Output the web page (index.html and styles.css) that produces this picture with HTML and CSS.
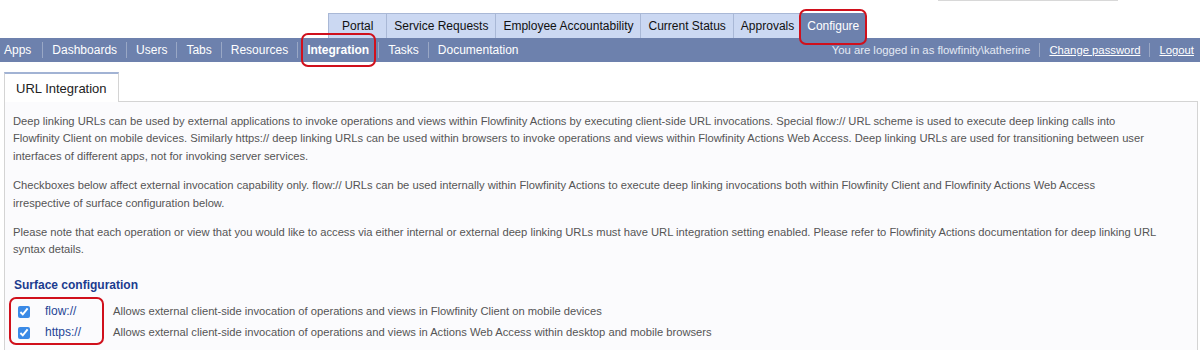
FILE: index.html
```html
<!DOCTYPE html>
<html lang="en">
<head>
    <meta charset="UTF-8">
    <title>Flowfinity Actions - Integration</title>
    <link rel="stylesheet" href="styles.css">
</head>
<body>
    <header class="topbar">
        <div class="search-line"></div>
        <ul class="app-tabs">
            <li>Portal</li>
            <li>Service Requests</li>
            <li>Employee Accountability</li>
            <li>Current Status</li>
            <li>Approvals</li>
            <li class="active marked">Configure</li>
        </ul>
    </header>

    <nav class="subnav">
        <ul class="subnav-left">
            <li>Apps</li>
            <li>Dashboards</li>
            <li>Users</li>
            <li>Tabs</li>
            <li>Resources</li>
            <li class="current marked">Integration</li>
            <li>Tasks</li>
            <li>Documentation</li>
        </ul>
        <ul class="subnav-right">
            <li>You are logged in as flowfinity\katherine</li>
            <li><a href="#">Change password</a></li>
            <li><a href="#">Logout</a></li>
        </ul>
    </nav>

    <main>
        <div class="page-tabs">
            <div class="page-tab">URL Integration</div>
        </div>
        <section class="panel">
            <p>Deep linking URLs can be used by external applications to invoke operations and views within Flowfinity Actions by executing client-side URL invocations. Special flow:// URL scheme is used to execute deep linking calls into Flowfinity Client on mobile devices. Similarly https:// deep linking URLs can be used within browsers to invoke operations and views within Flowfinity Actions Web Access. Deep linking URLs are used for transitioning between user interfaces of different apps, not for invoking server services.</p>
            <p>Checkboxes below affect external invocation capability only. flow:// URLs can be used internally within Flowfinity Actions to execute deep linking invocations both within Flowfinity Client and Flowfinity Actions Web Access<br>irrespective of surface configuration below.</p>
            <p>Please note that each operation or view that you would like to access via either internal or external deep linking URLs must have URL integration setting enabled. Please refer to Flowfinity Actions documentation for deep linking URL syntax details.</p>

            <h3>Surface configuration</h3>
            <div class="surfaces">
                <div class="surface-checks marked"></div>
                <label class="surface">
                    <input type="checkbox" checked>
                    <span class="scheme">flow://</span>
                    <span class="desc">Allows external client-side invocation of operations and views in Flowfinity Client on mobile devices</span>
                </label>
                <label class="surface">
                    <input type="checkbox" checked>
                    <span class="scheme">https://</span>
                    <span class="desc">Allows external client-side invocation of operations and views in Actions Web Access within desktop and mobile browsers</span>
                </label>
            </div>
        </section>
    </main>
</body>
</html>
```

FILE: styles.css
```css
:root {
    --bar: #6d81ad;
    --tab: #cbd8f2;
    --tab-border: #a9b8d6;
    --text: #555;
    --heading: #1b3c8f;
    --link: #1f4596;
    --mark: #d0101c;
}

* {
    box-sizing: border-box;
}

body {
    margin: 0;
    font-family: "Liberation Sans", Arial, sans-serif;
    color: var(--text);
    background: #fff;
}

ul {
    list-style: none;
    margin: 0;
    padding: 0;
}

.marked {
    position: relative;
}

.marked::after {
    content: "";
    position: absolute;
    inset: -4px;
    border: 2px solid var(--mark);
    border-radius: 7px;
    pointer-events: none;
}

/* top tabs */
.topbar {
    position: relative;
    height: 38px;
    padding-top: 13px;
    padding-left: 329px;
}

.search-line {
    position: absolute;
    top: 0;
    left: 938px;
    width: 180px;
    height: 1px;
    background: #d8d8d8;
}

.app-tabs {
    display: flex;
    height: 25px;
}

.app-tabs li {
    background: var(--tab);
    border: 1px solid var(--tab-border);
    border-bottom: none;
    margin-left: -1px;
    padding: 0 7px;
    font-size: 12px;
    line-height: 24px;
    color: #111;
}

.app-tabs li:first-child {
    padding: 0 13px;
}

.app-tabs li.active {
    background: var(--bar);
    border-color: var(--bar);
    color: #fff;
    padding: 0 5px;
}

.app-tabs li.active::after {
    inset: -5px -3px -7px -3px;
}

/* sub navigation */
.subnav {
    display: flex;
    justify-content: space-between;
    height: 24px;
    background: var(--bar);
    color: #fff;
    font-size: 12px;
    line-height: 24px;
}

.subnav ul {
    display: flex;
    align-items: center;
}

.subnav-left li {
    padding: 0 9px;
    border-left: 1px solid rgba(255, 255, 255, 0.3);
    line-height: 16px;
}

.subnav-left li:first-child {
    padding-left: 4px;
    padding-right: 11px;
    border-left: none;
}

.subnav-left li.current {
    font-weight: bold;
}

.subnav-left li.current::after {
    inset: -9px 2px -9px 3px;
}

.subnav-right {
    font-size: 11.3px;
}

.subnav-right li {
    padding: 0 9px;
    border-left: 1px solid rgba(255, 255, 255, 0.3);
    line-height: 14px;
    color: #e4e9f3;
}

.subnav-right li:first-child {
    border-left: none;
}

.subnav-right li:last-child {
    padding-right: 6px;
}

.subnav-right a {
    color: #fff;
}

/* page body */
main {
    padding: 10px 2px 0 4px;
}

.page-tabs {
    display: flex;
    height: 30px;
}

.page-tab {
    width: 115px;
    border: 1px solid #d4d4d4;
    border-top: 2px solid #a2b3d4;
    border-bottom: none;
    background: #fff;
    color: #222;
    font-size: 13px;
    padding: 7px 0 0 11px;
    position: relative;
    z-index: 1;
}

.panel {
    border: 1px solid #d4d4d4;
    background: #fbfbfd;
    margin-top: -1px;
    padding: 11px 8px 12px 8px;
    font-size: 11.2px;
    line-height: 17.4px;
    min-height: 260px;
}

.panel p {
    margin: 0 0 12px;
    max-width: 1150px;
    color: #555;
}

.panel h3 {
    margin: 18px 0 7px 1px;
    font-size: 12px;
    color: var(--heading);
}

.surfaces {
    position: relative;
}

.surface-checks {
    position: absolute;
    left: 0;
    top: 0;
    width: 87px;
    height: 40px;
}

.surface {
    display: flex;
    align-items: center;
    height: 21px;
}

.surface input {
    width: 12px;
    height: 12px;
    margin: 0 0 0 5px;
    accent-color: #3b8ae6;
}

.surface .scheme {
    width: 83px;
    padding-left: 15px;
    color: var(--link);
    font-size: 12px;
}

.surface .desc {
    color: #555;
}
```
